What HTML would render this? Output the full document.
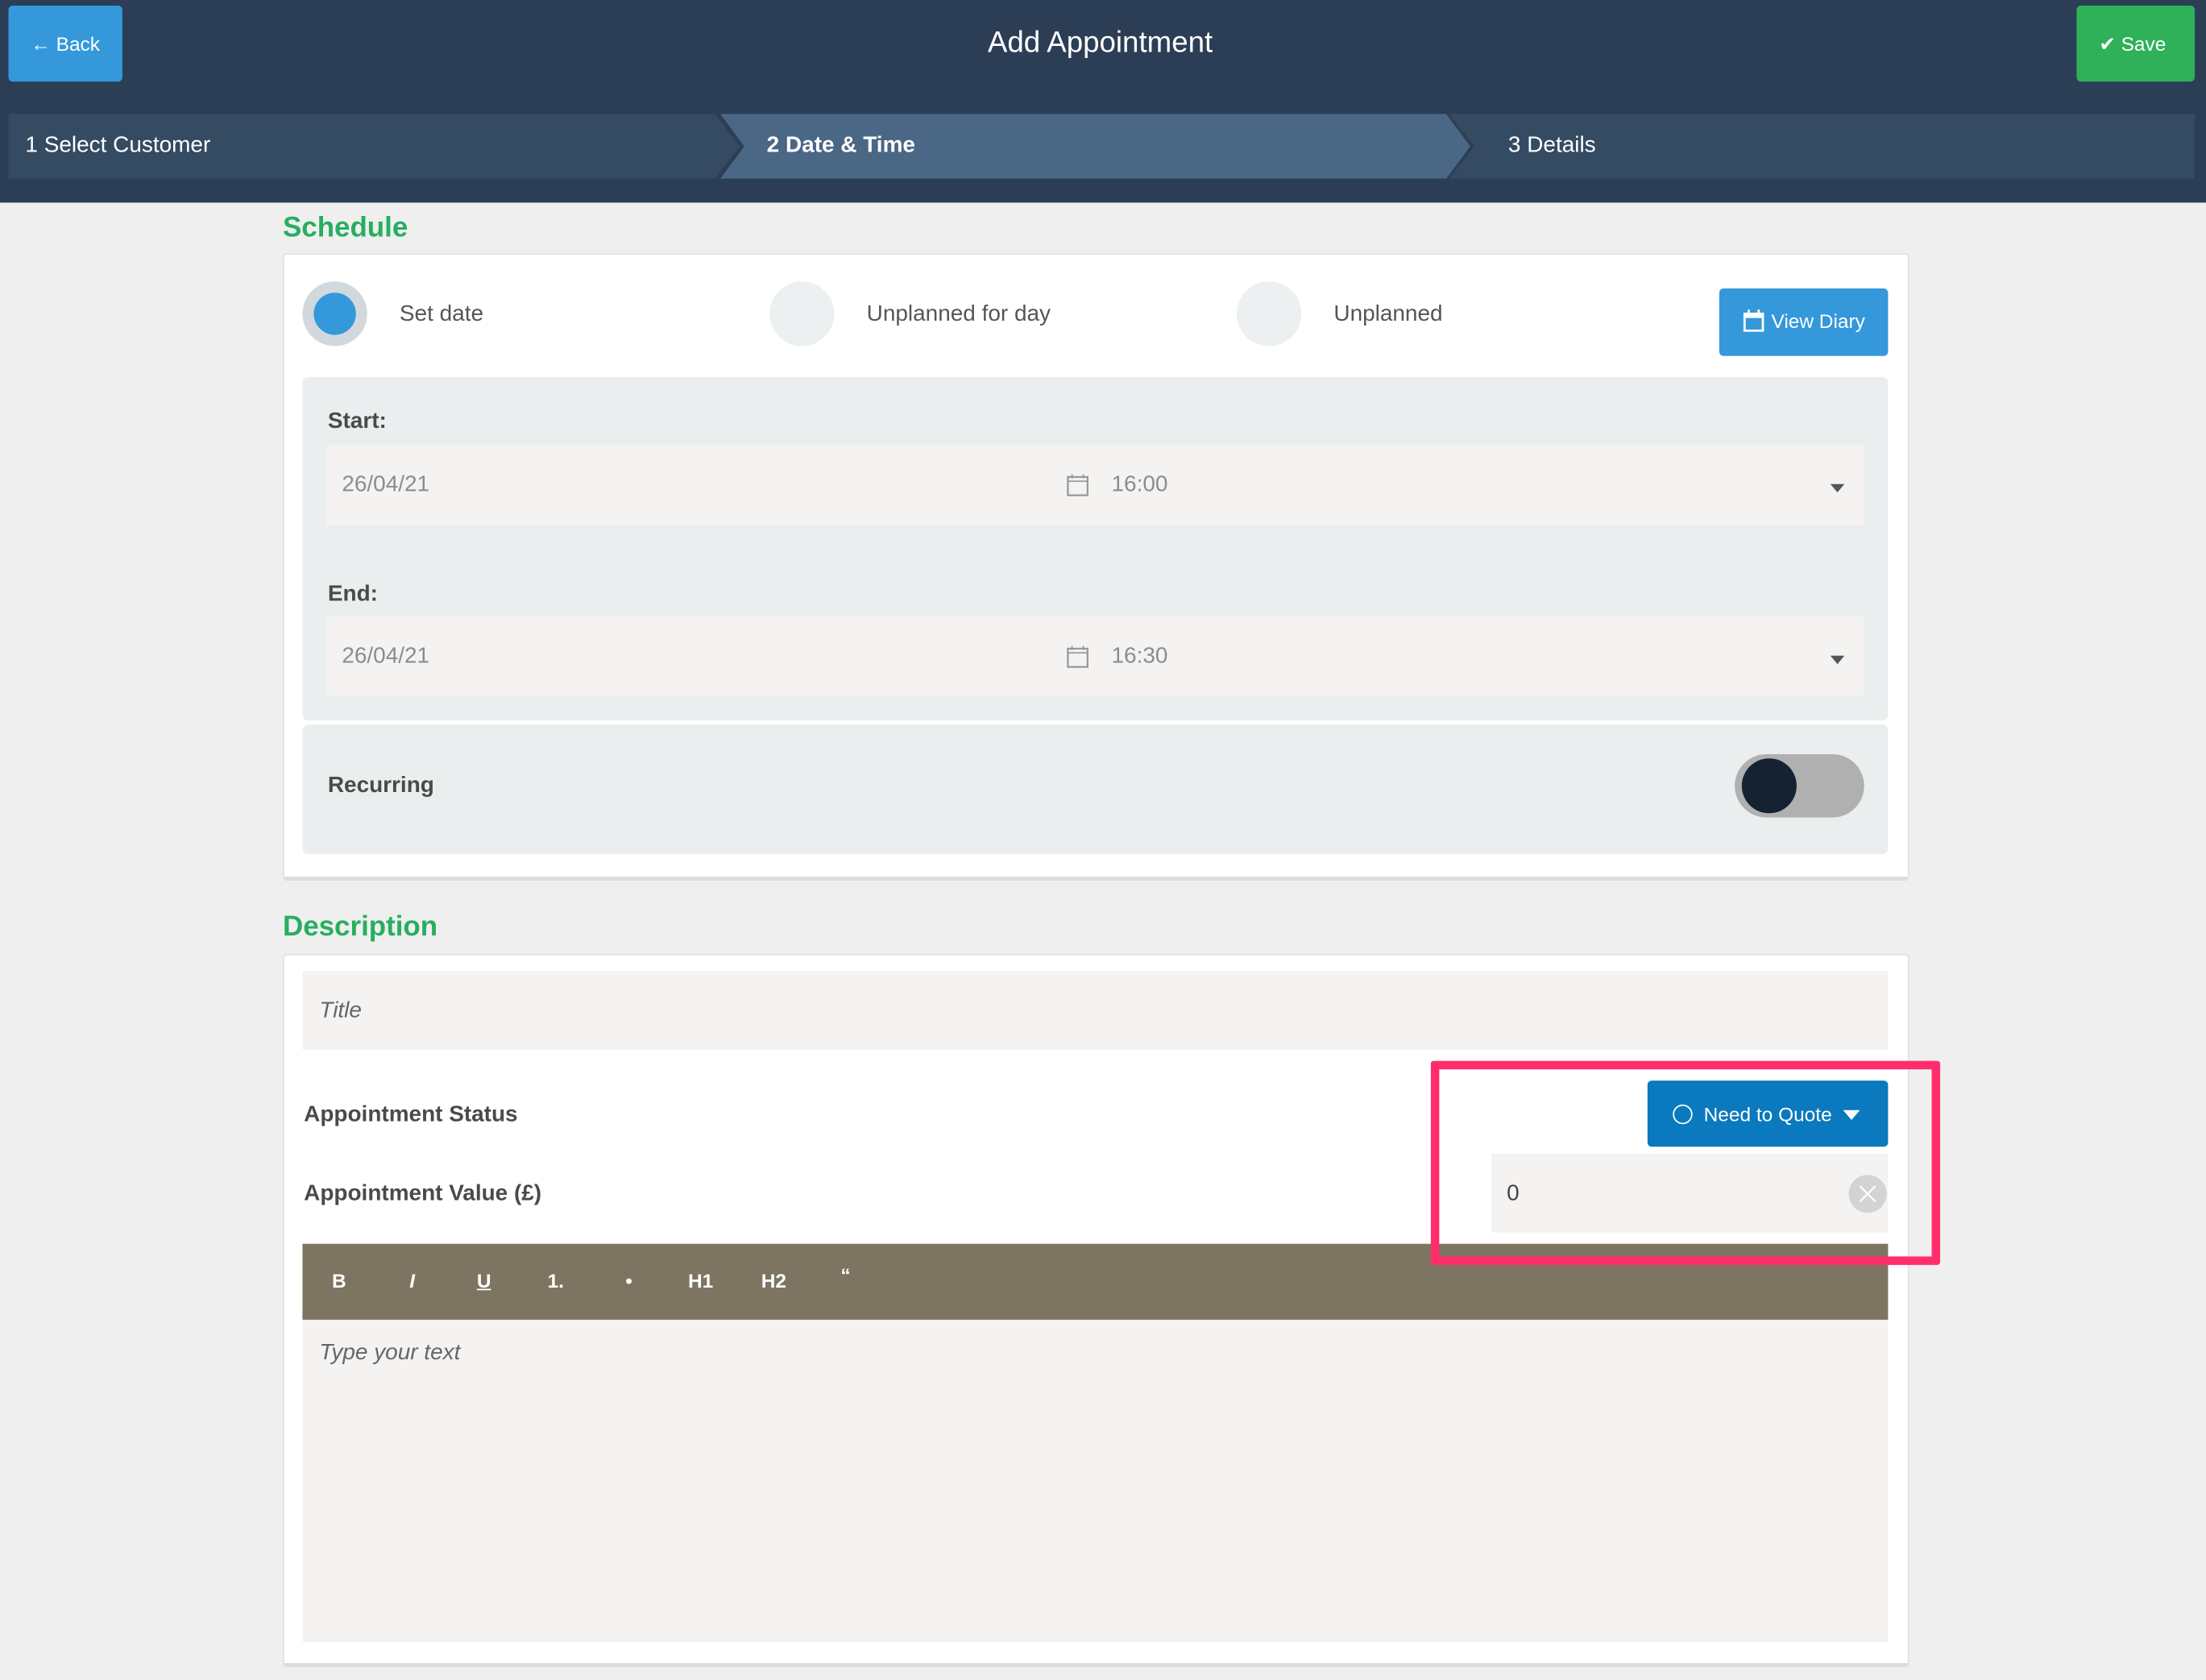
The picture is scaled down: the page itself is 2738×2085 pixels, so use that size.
<!DOCTYPE html>
<html><head><meta charset="utf-8"><style>
html,body{margin:0;padding:0;width:2738px;height:2084px;overflow:hidden;background:#efefef}
#w{position:absolute;left:0;top:0;width:1568px;height:1194px;transform:scale(1.7462);transform-origin:0 0;font-family:"Liberation Sans",sans-serif;background:#efefef}
.a{position:absolute}
.t{position:absolute;white-space:nowrap}
.lbl{font-size:16px;font-weight:bold;color:#4a4a4a}
.inp{position:absolute;background:#f4f3f1}
.gr{color:#8c8c8c;font-size:16px}
.caret{position:absolute;width:0;height:0;border-left:5px solid transparent;border-right:5px solid transparent;border-top:6px solid #555}
.tb{position:absolute;top:902px;color:#fff;font-weight:bold;font-size:14px;transform:translateX(-50%)}
</style></head><body><div id="w">
<div class="a" style="left:0;top:0;width:1568px;height:144px;background:#2c3e55"></div>
<div class="a" style="left:6px;top:4px;width:81px;height:54px;background:#3498db;border-radius:3px"></div>
<div class="t" style="left:22px;top:23px;color:#fff;font-size:14px">&#8592; Back</div>
<div class="t" style="left:0;width:1564px;text-align:center;top:19px;color:#fff;font-size:21px">Add Appointment</div>
<div class="a" style="left:1476px;top:4px;width:84px;height:54px;background:#2eb158;border-radius:3px"></div>
<div class="t" style="left:1492px;top:23px;color:#fff;font-size:14px">&#10004; Save</div>
<div class="a" style="left:6px;top:81px;width:1554px;height:46px;background:#354b62"></div>
<svg class="a" style="left:500px;top:81px" width="570" height="46"><polygon points="8,0 530,0 548,23 530,46 8,46 26,23" fill="#2c3e55"/><polygon points="12,0 528,0 545,23 528,46 12,46 29,23" fill="#4a6785"/></svg>
<div class="t" style="left:18px;top:95px;color:#fff;font-size:16px">1 Select Customer</div>
<div class="t" style="left:545px;top:95px;color:#fff;font-size:16px;font-weight:bold">2 Date &amp; Time</div>
<div class="t" style="left:1072px;top:95px;color:#fff;font-size:16px">3 Details</div>

<div class="t" style="left:201px;top:151px;color:#27ae60;font-size:20px;font-weight:bold">Schedule</div>
<div class="a" style="left:201px;top:180px;width:1154px;height:442px;background:#fff;border:1px solid #e2e2e2;border-bottom:3px solid #ddd;border-radius:3px"></div>
<div class="a" style="left:215px;top:200px;width:46px;height:46px;border-radius:50%;background:#d1d9dd"></div>
<div class="a" style="left:223px;top:208px;width:30px;height:30px;border-radius:50%;background:#3498db"></div>
<div class="t" style="left:284px;top:215px;color:#555;font-size:16px">Set date</div>
<div class="a" style="left:547px;top:200px;width:46px;height:46px;border-radius:50%;background:#ecf0f1"></div>
<div class="t" style="left:616px;top:215px;color:#555;font-size:16px">Unplanned for day</div>
<div class="a" style="left:879px;top:200px;width:46px;height:46px;border-radius:50%;background:#ecf0f1"></div>
<div class="t" style="left:948px;top:215px;color:#555;font-size:16px">Unplanned</div>
<div class="a" style="left:1222px;top:205px;width:120px;height:48px;background:#3498db;border-radius:3px"></div>
<svg class="a" style="left:1239px;top:220px" width="15" height="16"><rect x="1" y="3" width="13" height="12" fill="none" stroke="#fff" stroke-width="1.6"/><rect x="1" y="3" width="13" height="3" fill="#fff"/><line x1="4" y1="0" x2="4" y2="4" stroke="#fff" stroke-width="1.5"/><line x1="11" y1="0" x2="11" y2="4" stroke="#fff" stroke-width="1.5"/></svg>
<div class="t" style="left:1259px;top:220px;color:#fff;font-size:14px">View Diary</div>

<div class="a" style="left:215px;top:268px;width:1127px;height:244px;background:#ebeeef;border-radius:4px"></div>
<div class="t lbl" style="left:233px;top:291px">Start:</div>
<div class="inp" style="left:232px;top:316px;width:1093px;height:57px"></div>
<div class="t gr" style="left:243px;top:336px">26/04/21</div>
<svg class="a" style="left:758px;top:336px" width="17" height="17"><rect x="1" y="3" width="14" height="13" fill="none" stroke="#999" stroke-width="1.3"/><line x1="1" y1="6" x2="15" y2="6" stroke="#999"/><line x1="4" y1="1" x2="4" y2="4" stroke="#999"/><line x1="12" y1="1" x2="12" y2="4" stroke="#999"/></svg>
<div class="t gr" style="left:790px;top:336px">16:00</div>
<div class="caret" style="left:1301px;top:344px"></div>
<div class="t lbl" style="left:233px;top:414px">End:</div>
<div class="inp" style="left:232px;top:438px;width:1093px;height:57px"></div>
<div class="t gr" style="left:243px;top:458px">26/04/21</div>
<svg class="a" style="left:758px;top:458px" width="17" height="17"><rect x="1" y="3" width="14" height="13" fill="none" stroke="#999" stroke-width="1.3"/><line x1="1" y1="6" x2="15" y2="6" stroke="#999"/><line x1="4" y1="1" x2="4" y2="4" stroke="#999"/><line x1="12" y1="1" x2="12" y2="4" stroke="#999"/></svg>
<div class="t gr" style="left:790px;top:458px">16:30</div>
<div class="caret" style="left:1301px;top:466px"></div>

<div class="a" style="left:215px;top:515px;width:1127px;height:92px;background:#ebeeef;border-radius:4px"></div>
<div class="t lbl" style="left:233px;top:550px">Recurring</div>
<div class="a" style="left:1233px;top:536px;width:92px;height:45px;border-radius:23px;background:#b0b0b0"></div>
<div class="a" style="left:1238px;top:539px;width:39px;height:39px;border-radius:50%;background:#142231"></div>

<div class="t" style="left:201px;top:648px;color:#27ae60;font-size:20px;font-weight:bold">Description</div>
<div class="a" style="left:201px;top:678px;width:1154px;height:503px;background:#fff;border:1px solid #e2e2e2;border-bottom:3px solid #ddd;border-radius:3px"></div>
<div class="inp" style="left:215px;top:690px;width:1127px;height:56px"></div>
<div class="t" style="left:227px;top:710px;color:#666;font-size:16px;font-style:italic">Title</div>
<div class="t lbl" style="left:216px;top:784px">Appointment Status</div>
<div class="t lbl" style="left:216px;top:840px">Appointment Value (£)</div>
<div class="a" style="left:1171px;top:768px;width:171px;height:47px;background:#0a79be;border-radius:3px"></div>
<div class="a" style="left:1189px;top:785px;width:12px;height:12px;border:1px solid #fff;border-radius:50%"></div>
<div class="t" style="left:1211px;top:784px;color:#fff;font-size:14px">Need to Quote</div>
<div class="a" style="left:1310px;top:789px;width:0;height:0;border-left:6px solid transparent;border-right:6px solid transparent;border-top:7px solid #fff"></div>
<div class="inp" style="left:1060px;top:820px;width:282px;height:56px"></div>
<div class="t" style="left:1071px;top:840px;color:#444;font-size:16px">0</div>
<div class="a" style="left:1314px;top:835px;width:27px;height:27px;border-radius:50%;background:#d3d3d3"></div>
<svg class="a" style="left:1320px;top:841px" width="15" height="15"><path d="M2 2L13 13M13 2L2 13" stroke="#fff" stroke-width="1.3"/></svg>

<div class="a" style="left:215px;top:884px;width:1127px;height:54px;background:#7d7561"></div>
<div class="tb" style="left:241px">B</div>
<div class="tb" style="left:293px;font-style:italic">I</div>
<div class="tb" style="left:344px;text-decoration:underline">U</div>
<div class="tb" style="left:395px">1.</div>
<div class="tb" style="left:447px">•</div>
<div class="tb" style="left:498px">H1</div>
<div class="tb" style="left:550px">H2</div>
<div class="tb" style="left:601px;top:898px">“</div>
<div class="inp" style="left:215px;top:938px;width:1127px;height:229px"></div>
<div class="t" style="left:227px;top:953px;color:#666;font-size:16px;font-style:italic">Type your text</div>

<div class="a" style="left:1017px;top:754px;width:350px;height:133px;border:6px solid #ff2d6b;border-radius:2px"></div>
</div></body></html>
